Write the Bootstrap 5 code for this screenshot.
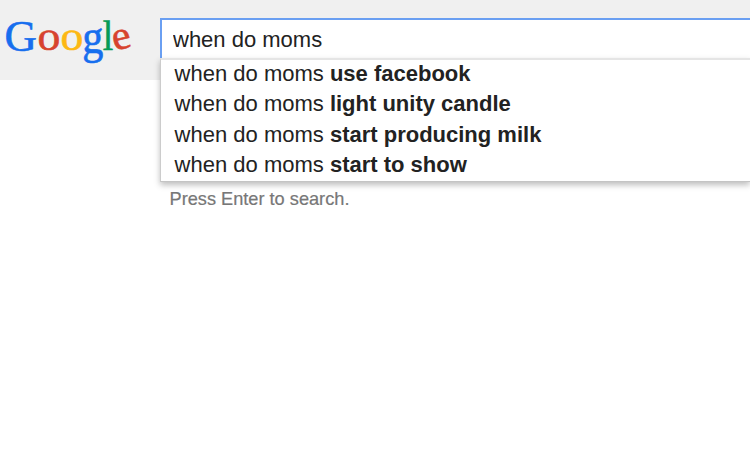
<!DOCTYPE html>
<html lang="en">
<head>
<meta charset="utf-8">
<meta name="viewport" content="width=device-width, initial-scale=1">
<title>Google</title>
<link href="https://cdn.jsdelivr.net/npm/bootstrap@5.3.0/dist/css/bootstrap.min.css" rel="stylesheet">
<style>
  body { font-family: "Liberation Sans", Arial, sans-serif; color: #222; background: #fff; }
  .search-header { height: 80px; background: #f0f0f0; }
  .brand-logo { width: 160px; height: 80px; font-family: "Liberation Serif", "Times New Roman", serif; }
  .search-area { padding-top: 18px; }
  .search-box.form-control { height: 40px; padding: 2px 11px 0 11px; border: 2px solid #6a9ff2; border-width: 2px 0 0 2px; color: #222; font-size: 22px; line-height: 34px; box-shadow: none; }
  .suggestions { margin-top: 0; padding: 0; border-top: 2px solid #e5e5e5; border-left: 1px solid #ccc; border-bottom: 1px solid #c4c4c4; box-shadow: 0 3px 6px rgba(0,0,0,.26); font-size: 22px; }
  .suggestions .list-group-item { height: 30.25px; padding: 0 0 0 13.6px; line-height: 27.4px; color: #222; background: #fff; }
  .hint { padding: 6px 0 0 9.5px; color: #777; font-size: 18.2px; line-height: 22px; -webkit-text-stroke: .2px #777; }
</style>
<script src="https://cdn.jsdelivr.net/npm/bootstrap@5.3.0/dist/js/bootstrap.bundle.min.js"></script>
</head>
<body class="min-vh-100">
<header class="search-header d-flex align-items-start">
  <a href="#" class="flex-shrink-0" aria-label="Google">
    <svg class="brand-logo d-block" viewBox="0 0 160 80" font-size="44" stroke-width=".6">
      <text transform="translate(4.5 50.6) scale(1.02 1.02)" fill="#176eee" stroke="#176eee">G</text>
      <text transform="translate(37.4 49.8) scale(1.04 .92)" fill="#d7432e" stroke="#d7432e">o</text>
      <text transform="translate(60.4 49.8) scale(1.04 .92)" fill="#fdb813" stroke="#fdb813">o</text>
      <text transform="translate(82.2 53) scale(.96 1.12)" fill="#176eee" stroke="#176eee">g</text>
      <text transform="translate(102.8 50) scale(.86 .94)" fill="#059b56" stroke="#059b56">l</text>
      <text transform="translate(114.4 50.8) rotate(-13) scale(.96 .92)" fill="#d7432e" stroke="#d7432e">e</text>
    </svg>
  </a>
  <main class="search-area flex-grow-1">
    <input class="search-box form-control rounded-0" type="text" value="when do moms" aria-label="Search">
    <ul class="suggestions list-group list-group-flush rounded-0">
      <li class="list-group-item border-0">when do moms <b>use facebook</b></li>
      <li class="list-group-item border-0">when do moms <b>light unity candle</b></li>
      <li class="list-group-item border-0">when do moms <b>start producing milk</b></li>
      <li class="list-group-item border-0">when do moms <b>start to show</b></li>
    </ul>
    <p class="hint mb-0">Press Enter to search.</p>
  </main>
</header>
</body>
</html>
